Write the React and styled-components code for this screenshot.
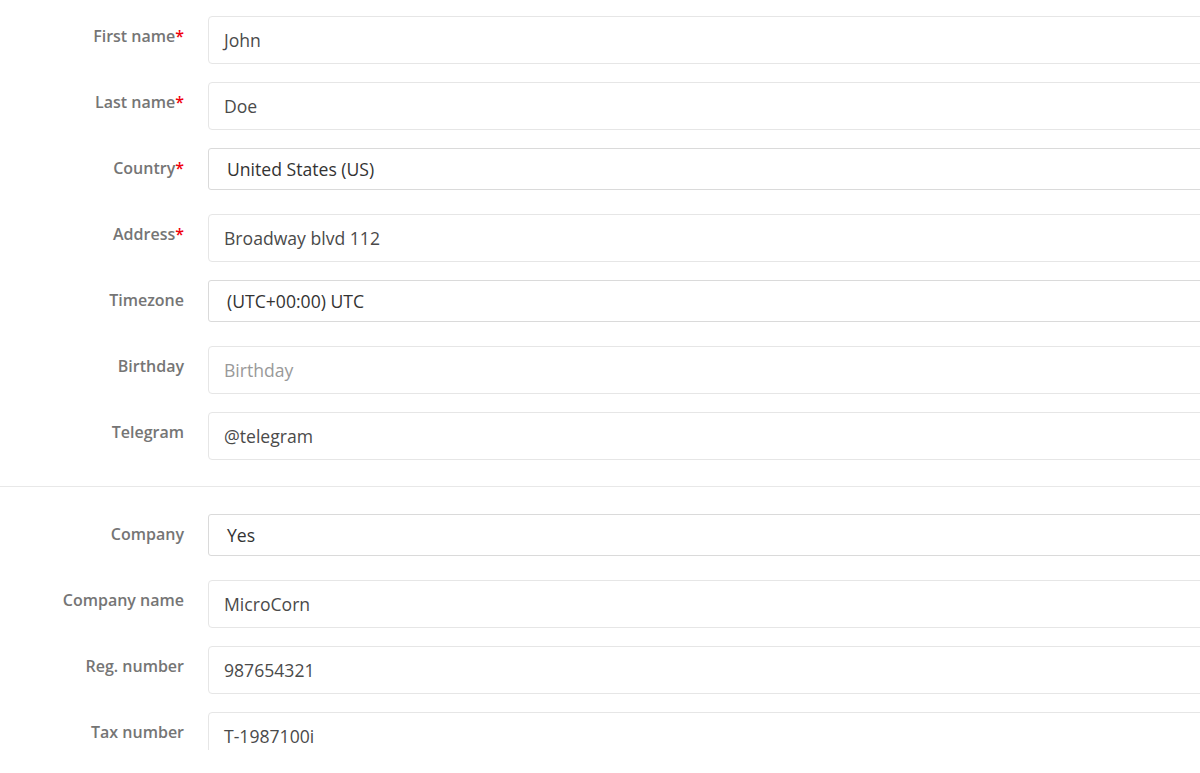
import React from 'react';
import styled, { createGlobalStyle } from 'styled-components';

const GlobalStyle = createGlobalStyle`
  html, body {
    margin: 0;
    padding: 0;
    background: #fff;
    overflow: hidden;
  }
  * {
    box-sizing: border-box;
  }
`;

const personal = [
  { label: 'First name', value: 'John', required: true },
  { label: 'Last name', value: 'Doe', required: true },
  { label: 'Country', value: 'United States (US)', required: true, select: true },
  { label: 'Address', value: 'Broadway blvd 112', required: true },
  { label: 'Timezone', value: '(UTC+00:00) UTC', select: true },
  { label: 'Birthday', placeholder: 'Birthday' },
  { label: 'Telegram', value: '@telegram' },
];

const company = [
  { label: 'Company', value: 'Yes', select: true },
  { label: 'Company name', value: 'MicroCorn' },
  { label: 'Reg. number', value: '987654321' },
  { label: 'Tax number', value: 'T-1987100i' },
];

const FormRow = ({ label, value, placeholder, required, select }) => (
  <Row>
    <Label>
      {label}
      {required && <Star>*</Star>}
    </Label>
    {select ? (
      <Select>{value}</Select>
    ) : (
      <Input>{value ? value : <Placeholder>{placeholder}</Placeholder>}</Input>
    )}
  </Row>
);

const App = () => {
  return (
    <Page>
      <GlobalStyle />
      <Section>
        {personal.map((f) => (
          <FormRow key={f.label} {...f} />
        ))}
      </Section>
      <Divider />
      <Section>
        {company.map((f) => (
          <FormRow key={f.label} {...f} />
        ))}
      </Section>
    </Page>
  );
};

const Page = styled.div`
  width: 1200px;
  height: 750px;
  overflow: hidden;
  padding-top: 16px;
  font-family: 'Open Sans', 'Liberation Sans', sans-serif;
`;

const Section = styled.div`
  display: flex;
  flex-direction: column;
  gap: 18px;
`;

const Row = styled.div`
  display: flex;
  align-items: flex-start;
  min-height: 48px;
`;

const Label = styled.div`
  width: 184px;
  flex-shrink: 0;
  margin-right: 24px;
  padding-top: 10px;
  text-align: right;
  font-size: 16px;
  line-height: 20px;
  font-weight: 600;
  color: #757575;
`;

const Star = styled.span`
  color: #f0000c;
`;

const Input = styled.div`
  flex: 1;
  margin-right: -20px;
  height: 48px;
  display: flex;
  align-items: center;
  padding: 0 15px 1px;
  border: 1px solid #e6e6e6;
  border-radius: 4px;
  font-size: 17.6px;
  color: #4a4a4a;
`;

const Select = styled(Input)`
  height: 42px;
  padding: 0 18px 1px;
  border-color: #dadada;
  border-radius: 3px;
  color: #333;
`;

const Placeholder = styled.span`
  color: #999;
`;

const Divider = styled.div`
  height: 1px;
  background: #e8e8e8;
  margin: 26px 0 27px;
`;

export default App;
